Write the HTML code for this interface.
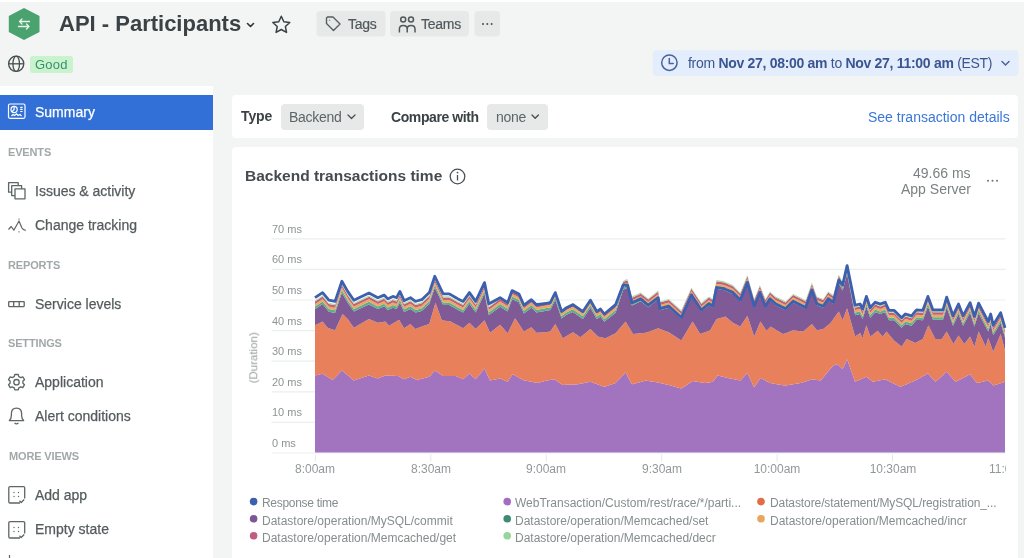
<!DOCTYPE html>
<html><head><meta charset="utf-8">
<style>
*{margin:0;padding:0;box-sizing:border-box}
html,body{width:1024px;height:558px;overflow:hidden;background:#f3f4f4;font-family:"Liberation Sans",sans-serif;color:#293338}
body{position:relative}
.a{position:absolute;white-space:nowrap;line-height:1;will-change:transform}
.box{position:absolute}
svg.full{position:absolute;left:0;top:0}
.nav{font-size:14px;color:#545c5e;-webkit-text-stroke:0.25px currentColor}
.hdr{font-size:11px;color:#a2a8a9;font-weight:700;letter-spacing:-0.15px}
.yl{font-size:11px;color:#8d9395}
.xl{font-size:12px;color:#92989a;text-align:center;width:60px}
.lg{font-size:12px;color:#868d8f}
</style></head><body>
<!-- top white strip -->
<div class="box" style="left:0;top:0;width:1024px;height:2px;background:#fff"></div>

<!-- header -->
<svg class="full" width="1024" height="100" viewBox="0 0 1024 100">
  <polygon points="24,8 39.5,16 39.5,32 24,40 8.8,32 8.8,16" fill="#4aa26e"/>
  <g stroke="#e8f4ec" stroke-width="1.3" fill="none" stroke-linecap="round" stroke-linejoin="round">
    <path d="M19.5,21.5 H29.5 M22,19 L19.5,21.5 L22,24"/>
    <path d="M18.5,26.5 H29 M26.5,24 L29,26.5 L26.5,29"/>
  </g>
  <!-- title chevron -->
  <path d="M247.5,23.5 L250.5,26.5 L253.5,23.5" stroke="#293338" stroke-width="1.6" fill="none" stroke-linecap="round" stroke-linejoin="round"/>
  <!-- star -->
  <path d="M281.30,16.30 L283.83,21.72 L289.76,22.45 L285.39,26.53 L286.53,32.40 L281.30,29.50 L276.07,32.40 L277.21,26.53 L272.84,22.45 L278.77,21.72 Z" stroke="#3a4145" stroke-width="1.5" fill="none" stroke-linejoin="round"/>
  <!-- buttons -->
  <rect x="316.5" y="11" width="69" height="25.5" rx="4" fill="#e7e9e9"/>
  <rect x="390" y="11" width="79" height="25.5" rx="4" fill="#e7e9e9"/>
  <rect x="474.5" y="11" width="25.5" height="25.5" rx="4" fill="#e7e9e9"/>
  <!-- tag icon -->
  <path d="M326.5,18 V23.5 L333.5,30.5 L340,24 L333,17 H327.5 Z" stroke="#565e61" stroke-width="1.4" fill="none" stroke-linejoin="round"/>
  <circle cx="329.6" cy="20.2" r="0.8" fill="#8a9092"/>
  <!-- teams icon -->
  <g stroke="#50585b" stroke-width="1.5" fill="none">
    <circle cx="403.2" cy="19.6" r="2.5"/><circle cx="411" cy="19.6" r="2.5"/>
    <path d="M399.4,32.4 V29 Q399.4,25.4 403.3,25.4 Q407.2,25.4 407.2,29 V32.4 M407.2,29 Q407.2,25.4 411.1,25.4 Q415,25.4 415,29 V32.4"/>
  </g>
  <g fill="#464e4f"><circle cx="483" cy="24" r="1"/><circle cx="487.3" cy="24" r="1"/><circle cx="491.6" cy="24" r="1"/></g>
  <!-- globe -->
  <g stroke="#464e4f" stroke-width="1.3" fill="none">
    <circle cx="16.2" cy="63.8" r="7.6"/>
    <ellipse cx="16.2" cy="63.8" rx="3.3" ry="7.6"/>
    <path d="M8.6,63.8 H23.8"/>
  </g>
  <!-- good badge -->
  <rect x="30" y="56" width="43" height="17" rx="3" fill="#c9f3cd"/>
  <!-- time picker -->
  <rect x="652.7" y="50.3" width="365.7" height="25.7" rx="4" fill="#e3edfc"/>
  <g stroke="#4a63a0" stroke-width="1.5" fill="none" stroke-linecap="round">
    <circle cx="669.4" cy="62.7" r="7.7"/>
    <path d="M669.3,58.5 V63.6 H673.2"/>
    <path d="M1002,61.5 L1005.5,65 L1009,61.5"/>
  </g>
</svg>
<div class="a" style="left:59px;top:13.4px;font-size:22px;font-weight:700;color:#3b4246">API - Participants</div>
<div class="a" style="left:347.5px;top:16.75px;font-size:14px;color:#50585b;letter-spacing:-0.25px;-webkit-text-stroke:0.2px currentColor">Tags</div>
<div class="a" style="left:421px;top:16.75px;font-size:14px;color:#50585b;letter-spacing:-0.25px;-webkit-text-stroke:0.2px currentColor">Teams</div>
<div class="a" style="left:35px;top:58.3px;font-size:13px;color:#3b8f6e;letter-spacing:0.2px">Good</div>
<div class="a" style="left:688px;top:55.95px;font-size:14px;color:#3a5592;letter-spacing:-0.3px">from <b>Nov 27, 08:00 am</b> to <b>Nov 27, 11:00 am</b> (EST)</div>

<!-- sidebar -->
<div class="box" style="left:0;top:86px;width:213px;height:472px;background:#fff"></div>
<div class="box" style="left:0;top:94.9px;width:213px;height:34.7px;background:#326fd6"></div>
<svg class="full" width="213" height="558" viewBox="0 0 213 558">
  <!-- summary icon -->
  <g stroke="#fff" stroke-width="1.2" fill="none">
    <rect x="8.5" y="104" width="16.5" height="14.3" rx="1.5"/>
    <circle cx="14.1" cy="109.5" r="3.1"/>
    <path d="M14.1,106.4 V109.5 L12,111.8 M20.2,107.3 H22.6 M20.2,109.4 H22.6 M20.2,111.5 H22.6 M11.5,116 L13,114.5 L14.5,115.5 L16.5,113.8 L18,115.5 L20,114.5 L21.5,116"/>
  </g>
  <g stroke="#5d6567" stroke-width="1.3" fill="none" stroke-linejoin="round">
    <!-- issues icon -->
    <rect x="8.6" y="182.6" width="9.6" height="9.6" fill="#fff"/>
    <rect x="11.7" y="185.7" width="9.9" height="9.9" fill="#fff"/>
    <rect x="15" y="188.8" width="10" height="10" fill="#fff"/>
    <!-- change tracking -->
    <path d="M8.5,229.5 L11.2,226.5 L13.8,230.2 L16.5,225.5 L19,221 L21.8,227.8 Q23,230.3 25.8,230.3" stroke-width="1.2"/>
    <path d="M19,218.5 V219.8 M19,231.2 V232.5" stroke-width="1"/>
    <!-- service levels -->
    <rect x="8.7" y="301.6" width="15.5" height="5" rx="0.5"/>
    <path d="M13.7,301.6 V306.6 M19.2,301.6 V306.6"/>
    <!-- gear -->
    <circle cx="16.5" cy="382.2" r="2.7"/>
    <path d="M14.8,374.5 H18.2 L18.8,376.6 L20.8,377.6 L22.8,376.8 L24.5,379.7 L22.9,381.1 V383.3 L24.5,384.7 L22.8,387.6 L20.8,386.8 L18.8,387.8 L18.2,389.9 H14.8 L14.2,387.8 L12.2,386.8 L10.2,387.6 L8.5,384.7 L10.1,383.3 V381.1 L8.5,379.7 L10.2,376.8 L12.2,377.6 L14.2,376.6 Z"/>
    <!-- bell -->
    <path d="M9.3,420.6 H23.7 Q21.6,418.6 21.6,415.2 V413.6 Q21.6,408.2 16.5,408.2 Q11.4,408.2 11.4,413.6 V415.2 Q11.4,418.6 9.3,420.6 Z M14.6,423 Q16.5,424.9 18.4,423"/>
    <path d="M9.5,555 V558" stroke-width="1.2"/>
    <!-- add app -->
    <path d="M20,503 H10 Q8.8,503 8.8,501.8 V487.8 Q8.8,486.6 10,486.6 H23.5 Q24.7,486.6 24.7,487.8 V498.5 M19.5,500.8 L21.2,502.5 L24.2,499.5"/>
    <path d="M20,538 H10 Q8.8,538 8.8,536.8 V522.8 Q8.8,521.6 10,521.6 H23.5 Q24.7,521.6 24.7,522.8 V533.5 M19.5,535.8 L21.2,537.5 L24.2,534.5"/>
  </g>
  <g fill="#5d6567">
    <circle cx="14" cy="492.5" r="0.7"/><circle cx="18.5" cy="492.5" r="0.7"/><circle cx="14" cy="496.5" r="0.7"/><circle cx="18.5" cy="496.5" r="0.7"/>
    <circle cx="14" cy="527.5" r="0.7"/><circle cx="18.5" cy="527.5" r="0.7"/><circle cx="14" cy="531.5" r="0.7"/><circle cx="18.5" cy="531.5" r="0.7"/>
  </g>
</svg>
<div class="a nav" style="left:35px;top:105.15px;color:#fff">Summary</div>
<div class="a hdr" style="left:8px;top:146.7px">EVENTS</div>
<div class="a nav" style="left:34.6px;top:183.5px">Issues &amp; activity</div>
<div class="a nav" style="left:34.6px;top:218.4px">Change tracking</div>
<div class="a hdr" style="left:8px;top:260.1px">REPORTS</div>
<div class="a nav" style="left:34.8px;top:296.8px">Service levels</div>
<div class="a hdr" style="left:8px;top:338.1px">SETTINGS</div>
<div class="a nav" style="left:34.8px;top:375.2px">Application</div>
<div class="a nav" style="left:34.8px;top:409.1px">Alert conditions</div>
<div class="a hdr" style="left:8.5px;top:451.4px">MORE VIEWS</div>
<div class="a nav" style="left:34.9px;top:487.8px">Add app</div>
<div class="a nav" style="left:34.9px;top:522.2px">Empty state</div>

<!-- card 1 -->
<div class="box" style="left:232px;top:94.5px;width:786px;height:43.5px;background:#fff;border-radius:4px"></div>
<div class="box" style="left:280.6px;top:103.5px;width:83.4px;height:26px;background:#e7e9e9;border-radius:4px"></div>
<div class="box" style="left:487.2px;top:103.5px;width:60.8px;height:26px;background:#e7e9e9;border-radius:4px"></div>
<svg class="full" width="1024" height="140" viewBox="0 0 1024 140">
  <g stroke="#464e4f" stroke-width="1.3" fill="none" stroke-linecap="round" stroke-linejoin="round">
    <path d="M348,115 L351.5,118.5 L355,115"/>
    <path d="M532,115 L535.2,118.3 L538.4,115"/>
  </g>
</svg>
<div class="a" style="left:240.5px;top:109.15px;font-size:14px;font-weight:700;color:#3a4245;letter-spacing:-0.1px">Type</div>
<div class="a" style="left:289.4px;top:109.65px;font-size:14px;color:#5d6567;letter-spacing:-0.3px">Backend</div>
<div class="a" style="left:390.9px;top:109.65px;font-size:14px;font-weight:700;color:#3a4245;letter-spacing:-0.4px">Compare with</div>
<div class="a" style="left:496px;top:109.65px;font-size:14px;color:#5d6567;letter-spacing:-0.3px">none</div>
<div class="a" style="left:868px;top:109.5px;font-size:14px;color:#3a77d8">See transaction details</div>

<!-- card 2 -->
<div class="box" style="left:232px;top:147px;width:786px;height:420px;background:#fff;border-radius:4px"></div>
<div class="a" style="left:244.6px;top:167.9px;font-size:15.5px;font-weight:700;color:#454c50">Backend transactions time</div>
<svg class="full" width="1024" height="558" viewBox="0 0 1024 558">
  <g stroke="#4a5255" stroke-width="1.3" fill="none">
    <circle cx="457.5" cy="176.5" r="7.3"/>
    <path d="M457.5,175 V180.5"/>
  </g>
  <circle cx="457.5" cy="172.6" r="0.9" fill="#4a5255"/>
  <g fill="#6d7576"><circle cx="988" cy="180.8" r="1"/><circle cx="992.5" cy="180.8" r="1"/><circle cx="997" cy="180.8" r="1"/></g>
  <!-- gridlines -->
  <g stroke="#eceeee" stroke-width="1.2">
    <path d="M271.5,238.8 H1005.5 M271.5,269.4 H1005.5 M271.5,300.0 H1005.5 M271.5,330.6 H1005.5 M271.5,361.2 H1005.5 M271.5,391.8 H1005.5 M271.5,422.4 H1005.5 M271.5,453.0 H1005.5"/>
  </g>
  <g stroke="#e4e6e6" stroke-width="1">
    <path d="M315.3,454.5 V461.5 M430.8,454.5 V461.5 M546.2,454.5 V461.5 M661.7,454.5 V461.5 M777.1,454.5 V461.5 M892.5,454.5 V461.5"/>
  </g>
<polygon fill="#a274bf" points="315.0,375.5 322.6,373.7 327.6,376.9 328.8,377.6 332.6,380.0 335.1,377.4 341.9,370.5 342.6,371.1 347.7,375.3 353.9,380.5 359.0,378.8 369.0,375.5 377.8,378.5 384.1,376.0 385.3,375.5 387.8,375.6 389.1,375.7 392.9,375.8 394.1,375.8 396.6,375.9 397.9,376.0 399.1,376.6 399.9,377.1 404.1,379.3 410.4,376.7 415.4,379.3 416.7,380.0 421.7,378.7 429.3,376.7 434.8,370.5 435.5,371.0 441.8,375.1 443.1,376.0 449.3,376.0 450.6,376.0 455.6,376.0 458.1,377.1 463.1,379.3 469.4,373.5 475.7,379.3 484.5,368.5 488.8,377.9 490.0,380.5 500.1,378.5 507.6,381.8 512.1,375.0 512.6,374.2 515.1,375.6 518.9,377.8 522.7,380.0 523.9,380.2 531.4,381.7 536.5,382.8 537.7,383.0 546.5,380.5 550.3,379.9 554.0,379.3 555.3,380.1 561.6,384.2 562.8,385.0 566.6,384.8 572.9,384.5 577.9,384.3 580.4,383.8 582.9,383.3 590.4,381.8 596.7,384.1 598.0,384.5 600.5,385.4 604.3,386.8 605.5,386.4 615.6,383.0 623.1,375.1 625.6,372.5 627.6,376.2 631.9,384.3 633.1,384.0 640.7,381.9 645.7,380.5 648.2,380.9 658.2,382.5 660.0,382.9 668.8,385.1 681.3,388.6 691.4,381.9 692.6,381.1 700.2,382.3 701.4,382.5 705.2,383.1 709.0,382.4 710.2,382.2 712.7,381.8 716.5,377.0 717.7,375.5 724.0,377.1 725.3,377.4 727.8,378.0 732.8,379.0 740.3,380.5 747.4,373.0 754.2,387.6 759.9,378.8 760.4,378.0 765.4,380.5 766.7,381.2 770.0,382.8 770.5,383.1 775.5,383.9 783.0,385.2 785.5,385.6 793.1,384.3 800.6,383.1 803.1,382.3 805.6,381.4 811.9,379.3 816.9,380.0 820.7,380.5 823.2,377.5 828.2,371.5 830.7,368.5 833.2,365.5 837.5,364.2 838.8,365.5 842.6,369.3 847.1,359.2 855.1,381.8 860.1,379.6 862.6,378.5 866.4,376.8 870.2,379.8 872.7,381.8 875.2,381.3 877.7,380.8 880.2,380.3 882.7,379.8 885.2,379.3 886.5,379.9 889.0,381.2 894.0,383.7 900.3,386.8 901.6,386.3 905.3,384.7 906.6,384.2 911.6,382.1 915.4,380.5 916.6,379.8 922.9,376.3 927.9,373.5 928.4,374.1 932.9,379.0 935.4,381.8 941.7,376.2 943.0,375.1 946.7,371.8 953.0,379.0 953.5,379.5 955.5,381.8 958.5,380.3 963.1,377.9 964.3,377.3 970.1,374.3 974.4,379.9 976.9,383.1 978.6,382.7 985.7,381.1 988.2,380.5 990.7,383.1 993.2,385.6 1000.7,383.2 1005.0,381.8 1005.0,452.5 1000.7,452.5 993.2,452.5 990.7,452.5 988.2,452.5 985.7,452.5 978.6,452.5 976.9,452.5 974.4,452.5 970.1,452.5 964.3,452.5 963.1,452.5 958.5,452.5 955.5,452.5 953.5,452.5 953.0,452.5 946.7,452.5 943.0,452.5 941.7,452.5 935.4,452.5 932.9,452.5 928.4,452.5 927.9,452.5 922.9,452.5 916.6,452.5 915.4,452.5 911.6,452.5 906.6,452.5 905.3,452.5 901.6,452.5 900.3,452.5 894.0,452.5 889.0,452.5 886.5,452.5 885.2,452.5 882.7,452.5 880.2,452.5 877.7,452.5 875.2,452.5 872.7,452.5 870.2,452.5 866.4,452.5 862.6,452.5 860.1,452.5 855.1,452.5 847.1,452.5 842.6,452.5 838.8,452.5 837.5,452.5 833.2,452.5 830.7,452.5 828.2,452.5 823.2,452.5 820.7,452.5 816.9,452.5 811.9,452.5 805.6,452.5 803.1,452.5 800.6,452.5 793.1,452.5 785.5,452.5 783.0,452.5 775.5,452.5 770.5,452.5 770.0,452.5 766.7,452.5 765.4,452.5 760.4,452.5 759.9,452.5 754.2,452.5 747.4,452.5 740.3,452.5 732.8,452.5 727.8,452.5 725.3,452.5 724.0,452.5 717.7,452.5 716.5,452.5 712.7,452.5 710.2,452.5 709.0,452.5 705.2,452.5 701.4,452.5 700.2,452.5 692.6,452.5 691.4,452.5 681.3,452.5 668.8,452.5 660.0,452.5 658.2,452.5 648.2,452.5 645.7,452.5 640.7,452.5 633.1,452.5 631.9,452.5 627.6,452.5 625.6,452.5 623.1,452.5 615.6,452.5 605.5,452.5 604.3,452.5 600.5,452.5 598.0,452.5 596.7,452.5 590.4,452.5 582.9,452.5 580.4,452.5 577.9,452.5 572.9,452.5 566.6,452.5 562.8,452.5 561.6,452.5 555.3,452.5 554.0,452.5 550.3,452.5 546.5,452.5 537.7,452.5 536.5,452.5 531.4,452.5 523.9,452.5 522.7,452.5 518.9,452.5 515.1,452.5 512.6,452.5 512.1,452.5 507.6,452.5 500.1,452.5 490.0,452.5 488.8,452.5 484.5,452.5 475.7,452.5 469.4,452.5 463.1,452.5 458.1,452.5 455.6,452.5 450.6,452.5 449.3,452.5 443.1,452.5 441.8,452.5 435.5,452.5 434.8,452.5 429.3,452.5 421.7,452.5 416.7,452.5 415.4,452.5 410.4,452.5 404.1,452.5 399.9,452.5 399.1,452.5 397.9,452.5 396.6,452.5 394.1,452.5 392.9,452.5 389.1,452.5 387.8,452.5 385.3,452.5 384.1,452.5 377.8,452.5 369.0,452.5 359.0,452.5 353.9,452.5 347.7,452.5 342.6,452.5 341.9,452.5 335.1,452.5 332.6,452.5 328.8,452.5 327.6,452.5 322.6,452.5 315.0,452.5"/>
<polygon fill="#e8805c" points="315.0,325.3 322.6,321.5 327.6,327.8 328.8,328.2 332.6,329.5 335.1,330.3 341.9,315.5 342.6,314.0 347.7,319.0 353.9,327.8 359.0,324.8 369.0,319.0 377.8,322.8 384.1,321.7 385.3,321.5 387.8,324.3 389.1,325.8 392.9,323.5 394.1,322.8 396.6,321.3 397.9,320.5 399.1,319.8 399.9,321.2 404.1,328.3 410.4,324.0 415.4,329.0 416.7,328.5 421.7,326.5 429.3,324.0 434.8,305.1 435.5,302.7 441.8,320.3 443.1,320.5 449.3,321.3 450.6,321.5 455.6,324.2 458.1,325.6 463.1,328.3 469.4,322.8 475.7,329.0 484.5,320.3 488.8,330.1 490.0,332.8 500.1,324.8 507.6,333.3 512.1,324.2 512.6,323.2 515.1,318.2 518.9,324.0 522.7,329.8 523.9,331.6 531.4,327.3 536.5,332.8 537.7,332.7 546.5,331.9 550.3,331.6 554.0,326.0 555.3,324.0 561.6,336.0 562.8,338.3 566.6,336.0 572.9,332.3 577.9,335.6 580.4,337.3 582.9,335.2 590.4,329.0 596.7,335.3 598.0,336.6 600.5,337.2 604.3,338.0 605.5,338.3 615.6,333.3 623.1,324.4 625.6,321.5 627.6,324.9 631.9,332.1 633.1,334.1 640.7,333.3 645.7,332.8 648.2,331.9 658.2,328.3 660.0,329.0 668.8,332.3 681.3,340.4 691.4,323.6 692.6,321.6 700.2,334.1 701.4,333.6 705.2,332.2 709.0,330.8 710.2,330.3 712.7,325.8 716.5,319.0 717.7,318.7 724.0,316.9 725.3,316.5 727.8,318.6 732.8,322.8 740.3,326.6 747.4,315.8 754.2,336.6 759.9,322.8 760.4,321.6 765.4,328.9 766.7,330.8 770.0,327.2 770.5,326.6 775.5,329.6 783.0,334.1 785.5,333.2 793.1,330.3 800.6,331.3 803.1,331.6 805.6,329.5 811.9,324.1 816.9,330.3 820.7,329.6 823.2,329.1 828.2,324.9 830.7,322.8 833.2,319.3 837.5,313.3 838.8,311.5 842.6,320.3 847.1,308.2 855.1,336.6 860.1,332.9 862.6,337.9 866.4,325.3 870.2,336.6 872.7,334.7 875.2,332.7 877.7,330.8 880.2,333.7 882.7,336.6 885.2,333.3 886.5,331.6 889.0,334.5 894.0,340.4 900.3,345.6 901.6,346.7 905.3,341.1 906.6,339.1 911.6,341.3 915.4,342.9 916.6,342.3 922.9,339.1 927.9,326.6 928.4,325.3 932.9,334.2 935.4,339.1 941.7,339.1 943.0,337.2 946.7,331.6 953.0,343.2 953.5,344.1 955.5,340.6 958.5,335.4 963.1,342.3 964.3,344.1 970.1,336.6 974.4,346.7 976.9,337.7 978.6,331.6 985.7,346.7 988.2,337.9 990.7,344.8 993.2,351.7 1000.7,334.1 1005.0,350.4 1005.0,381.8 1000.7,383.2 993.2,385.6 990.7,383.1 988.2,380.5 985.7,381.1 978.6,382.7 976.9,383.1 974.4,379.9 970.1,374.3 964.3,377.3 963.1,377.9 958.5,380.3 955.5,381.8 953.5,379.5 953.0,379.0 946.7,371.8 943.0,375.1 941.7,376.2 935.4,381.8 932.9,379.0 928.4,374.1 927.9,373.5 922.9,376.3 916.6,379.8 915.4,380.5 911.6,382.1 906.6,384.2 905.3,384.7 901.6,386.3 900.3,386.8 894.0,383.7 889.0,381.2 886.5,379.9 885.2,379.3 882.7,379.8 880.2,380.3 877.7,380.8 875.2,381.3 872.7,381.8 870.2,379.8 866.4,376.8 862.6,378.5 860.1,379.6 855.1,381.8 847.1,359.2 842.6,369.3 838.8,365.5 837.5,364.2 833.2,365.5 830.7,368.5 828.2,371.5 823.2,377.5 820.7,380.5 816.9,380.0 811.9,379.3 805.6,381.4 803.1,382.3 800.6,383.1 793.1,384.3 785.5,385.6 783.0,385.2 775.5,383.9 770.5,383.1 770.0,382.8 766.7,381.2 765.4,380.5 760.4,378.0 759.9,378.8 754.2,387.6 747.4,373.0 740.3,380.5 732.8,379.0 727.8,378.0 725.3,377.4 724.0,377.1 717.7,375.5 716.5,377.0 712.7,381.8 710.2,382.2 709.0,382.4 705.2,383.1 701.4,382.5 700.2,382.3 692.6,381.1 691.4,381.9 681.3,388.6 668.8,385.1 660.0,382.9 658.2,382.5 648.2,380.9 645.7,380.5 640.7,381.9 633.1,384.0 631.9,384.3 627.6,376.2 625.6,372.5 623.1,375.1 615.6,383.0 605.5,386.4 604.3,386.8 600.5,385.4 598.0,384.5 596.7,384.1 590.4,381.8 582.9,383.3 580.4,383.8 577.9,384.3 572.9,384.5 566.6,384.8 562.8,385.0 561.6,384.2 555.3,380.1 554.0,379.3 550.3,379.9 546.5,380.5 537.7,383.0 536.5,382.8 531.4,381.7 523.9,380.2 522.7,380.0 518.9,377.8 515.1,375.6 512.6,374.2 512.1,375.0 507.6,381.8 500.1,378.5 490.0,380.5 488.8,377.9 484.5,368.5 475.7,379.3 469.4,373.5 463.1,379.3 458.1,377.1 455.6,376.0 450.6,376.0 449.3,376.0 443.1,376.0 441.8,375.1 435.5,371.0 434.8,370.5 429.3,376.7 421.7,378.7 416.7,380.0 415.4,379.3 410.4,376.7 404.1,379.3 399.9,377.1 399.1,376.6 397.9,376.0 396.6,375.9 394.1,375.8 392.9,375.8 389.1,375.7 387.8,375.6 385.3,375.5 384.1,376.0 377.8,378.5 369.0,375.5 359.0,378.8 353.9,380.5 347.7,375.3 342.6,371.1 341.9,370.5 335.1,377.4 332.6,380.0 328.8,377.6 327.6,376.9 322.6,373.7 315.0,375.5"/>
<polygon fill="#7f5a96" points="315.0,309.2 322.6,304.1 327.6,310.2 328.8,311.7 332.6,312.4 335.1,312.8 341.9,292.7 342.6,293.9 347.7,302.8 353.9,311.6 359.0,309.1 369.0,304.4 377.8,309.0 384.1,306.4 385.3,307.6 387.8,310.2 389.1,309.6 392.9,307.7 394.1,308.1 396.6,309.0 397.9,306.5 399.1,304.2 399.9,302.7 404.1,311.9 410.4,308.9 415.4,312.6 416.7,312.3 421.7,310.9 429.3,303.8 434.8,287.5 435.5,288.9 441.8,302.3 443.1,305.0 449.3,305.0 450.6,305.8 455.6,308.6 458.1,310.0 463.1,312.5 469.4,303.7 475.7,312.4 484.5,293.6 488.8,314.9 490.0,314.2 500.1,306.7 507.6,311.4 512.1,299.2 512.6,299.4 515.1,300.6 518.9,302.3 522.7,310.7 523.9,313.4 531.4,307.7 536.5,312.5 537.7,312.3 546.5,310.7 550.3,310.0 554.0,302.4 555.3,299.8 561.6,318.5 562.8,317.6 566.6,314.8 572.9,311.9 577.9,315.4 580.4,317.2 582.9,318.9 590.4,307.7 596.7,319.1 598.0,318.3 600.5,316.7 604.3,321.8 605.5,320.8 615.6,312.7 623.1,289.9 625.6,288.4 627.6,288.0 631.9,305.4 633.1,304.9 640.7,301.3 645.7,305.2 648.2,307.2 658.2,299.3 660.0,310.2 668.8,307.7 681.3,319.0 691.4,296.4 692.6,298.2 700.2,309.7 701.4,311.5 705.2,308.3 709.0,305.2 710.2,306.0 712.7,307.7 716.5,288.9 717.7,289.1 724.0,290.1 725.3,290.7 727.8,291.7 732.8,293.9 740.3,301.4 747.4,283.9 754.2,307.7 759.9,293.9 760.4,295.2 765.4,307.7 766.7,305.6 770.0,300.2 770.5,300.7 775.5,305.2 783.0,308.9 785.5,310.2 793.1,302.7 800.6,306.4 803.1,307.7 805.6,309.0 811.9,291.4 816.9,305.2 820.7,306.7 823.2,307.7 828.2,300.2 830.7,302.0 833.2,303.9 837.5,287.7 838.8,283.3 842.6,290.6 847.1,273.8 855.1,315.2 860.1,314.0 862.6,319.0 866.4,306.4 870.2,317.7 872.7,314.9 875.2,312.2 877.7,313.1 880.2,314.0 882.7,313.1 885.2,312.2 886.5,315.0 889.0,320.3 894.0,320.3 900.3,326.5 901.6,327.8 905.3,324.0 906.6,324.4 911.6,325.8 915.4,321.2 916.6,319.8 922.9,320.3 927.9,306.4 928.4,307.7 932.9,319.8 935.4,319.8 941.7,319.8 943.0,319.8 946.7,307.2 953.0,325.8 953.5,324.7 955.5,320.4 958.5,314.0 963.1,325.8 964.3,323.6 970.1,312.7 974.4,326.5 976.9,318.6 978.6,313.2 985.7,326.8 988.2,331.6 990.7,324.0 993.2,335.3 1000.7,322.8 1005.0,337.8 1005.0,350.4 1000.7,334.1 993.2,351.7 990.7,344.8 988.2,337.9 985.7,346.7 978.6,331.6 976.9,337.7 974.4,346.7 970.1,336.6 964.3,344.1 963.1,342.3 958.5,335.4 955.5,340.6 953.5,344.1 953.0,343.2 946.7,331.6 943.0,337.2 941.7,339.1 935.4,339.1 932.9,334.2 928.4,325.3 927.9,326.6 922.9,339.1 916.6,342.3 915.4,342.9 911.6,341.3 906.6,339.1 905.3,341.1 901.6,346.7 900.3,345.6 894.0,340.4 889.0,334.5 886.5,331.6 885.2,333.3 882.7,336.6 880.2,333.7 877.7,330.8 875.2,332.7 872.7,334.7 870.2,336.6 866.4,325.3 862.6,337.9 860.1,332.9 855.1,336.6 847.1,308.2 842.6,320.3 838.8,311.5 837.5,313.3 833.2,319.3 830.7,322.8 828.2,324.9 823.2,329.1 820.7,329.6 816.9,330.3 811.9,324.1 805.6,329.5 803.1,331.6 800.6,331.3 793.1,330.3 785.5,333.2 783.0,334.1 775.5,329.6 770.5,326.6 770.0,327.2 766.7,330.8 765.4,328.9 760.4,321.6 759.9,322.8 754.2,336.6 747.4,315.8 740.3,326.6 732.8,322.8 727.8,318.6 725.3,316.5 724.0,316.9 717.7,318.7 716.5,319.0 712.7,325.8 710.2,330.3 709.0,330.8 705.2,332.2 701.4,333.6 700.2,334.1 692.6,321.6 691.4,323.6 681.3,340.4 668.8,332.3 660.0,329.0 658.2,328.3 648.2,331.9 645.7,332.8 640.7,333.3 633.1,334.1 631.9,332.1 627.6,324.9 625.6,321.5 623.1,324.4 615.6,333.3 605.5,338.3 604.3,338.0 600.5,337.2 598.0,336.6 596.7,335.3 590.4,329.0 582.9,335.2 580.4,337.3 577.9,335.6 572.9,332.3 566.6,336.0 562.8,338.3 561.6,336.0 555.3,324.0 554.0,326.0 550.3,331.6 546.5,331.9 537.7,332.7 536.5,332.8 531.4,327.3 523.9,331.6 522.7,329.8 518.9,324.0 515.1,318.2 512.6,323.2 512.1,324.2 507.6,333.3 500.1,324.8 490.0,332.8 488.8,330.1 484.5,320.3 475.7,329.0 469.4,322.8 463.1,328.3 458.1,325.6 455.6,324.2 450.6,321.5 449.3,321.3 443.1,320.5 441.8,320.3 435.5,302.7 434.8,305.1 429.3,324.0 421.7,326.5 416.7,328.5 415.4,329.0 410.4,324.0 404.1,328.3 399.9,321.2 399.1,319.8 397.9,320.5 396.6,321.3 394.1,322.8 392.9,323.5 389.1,325.8 387.8,324.3 385.3,321.5 384.1,321.7 377.8,322.8 369.0,319.0 359.0,324.8 353.9,327.8 347.7,319.0 342.6,314.0 341.9,315.5 335.1,330.3 332.6,329.5 328.8,328.2 327.6,327.8 322.6,321.5 315.0,325.3"/>
<polygon fill="#5fae8c" points="315.0,306.6 322.6,301.5 327.6,307.6 328.8,309.1 332.6,309.8 335.1,310.2 341.9,290.1 342.6,291.3 347.7,300.2 353.9,309.0 359.0,306.5 369.0,301.8 377.8,306.4 384.1,303.8 385.3,305.0 387.8,307.6 389.1,307.0 392.9,305.1 394.1,305.5 396.6,306.4 397.9,303.9 399.1,301.6 399.9,300.1 404.1,309.3 410.4,306.3 415.4,310.0 416.7,309.7 421.7,308.3 429.3,301.2 434.8,284.9 435.5,286.3 441.8,299.7 443.1,302.4 449.3,302.4 450.6,303.2 455.6,306.0 458.1,307.4 463.1,309.9 469.4,301.1 475.7,309.8 484.5,291.0 488.8,312.3 490.0,311.6 500.1,304.1 507.6,308.8 512.1,296.6 512.6,296.8 515.1,298.0 518.9,299.7 522.7,308.1 523.9,310.8 531.4,305.1 536.5,309.9 537.7,309.7 546.5,308.1 550.3,307.4 554.0,299.8 555.3,297.2 561.6,315.9 562.8,315.0 566.6,312.2 572.9,309.3 577.9,312.8 580.4,314.6 582.9,316.3 590.4,305.1 596.7,316.5 598.0,315.7 600.5,314.1 604.3,319.2 605.5,318.2 615.6,310.1 623.1,287.3 625.6,285.8 627.6,285.4 631.9,302.8 633.1,302.3 640.7,298.7 645.7,302.6 648.2,304.6 658.2,296.7 660.0,307.6 668.8,305.1 681.3,316.4 691.4,293.8 692.6,295.6 700.2,307.1 701.4,308.9 705.2,305.7 709.0,302.6 710.2,303.4 712.7,305.1 716.5,286.3 717.7,286.5 724.0,287.5 725.3,288.1 727.8,289.1 732.8,291.3 740.3,298.8 747.4,281.3 754.2,305.1 759.9,291.3 760.4,292.6 765.4,305.1 766.7,303.0 770.0,297.6 770.5,298.1 775.5,302.6 783.0,306.3 785.5,307.6 793.1,300.1 800.6,303.8 803.1,305.1 805.6,306.4 811.9,288.8 816.9,302.6 820.7,304.1 823.2,305.1 828.2,297.6 830.7,299.4 833.2,301.3 837.5,285.1 838.8,280.7 842.6,288.0 847.1,271.2 855.1,312.6 860.1,311.4 862.6,316.4 866.4,303.8 870.2,315.1 872.7,312.3 875.2,309.6 877.7,310.5 880.2,311.4 882.7,310.5 885.2,309.6 886.5,312.4 889.0,317.7 894.0,317.7 900.3,323.9 901.6,325.2 905.3,321.4 906.6,321.8 911.6,323.2 915.4,318.6 916.6,317.2 922.9,317.7 927.9,303.8 928.4,305.1 932.9,317.2 935.4,317.2 941.7,317.2 943.0,317.2 946.7,304.6 953.0,323.2 953.5,322.1 955.5,317.8 958.5,311.4 963.1,323.2 964.3,321.0 970.1,310.1 974.4,323.9 976.9,316.0 978.6,310.6 985.7,324.2 988.2,329.0 990.7,321.4 993.2,332.7 1000.7,320.2 1005.0,335.2 1005.0,337.8 1000.7,322.8 993.2,335.3 990.7,324.0 988.2,331.6 985.7,326.8 978.6,313.2 976.9,318.6 974.4,326.5 970.1,312.7 964.3,323.6 963.1,325.8 958.5,314.0 955.5,320.4 953.5,324.7 953.0,325.8 946.7,307.2 943.0,319.8 941.7,319.8 935.4,319.8 932.9,319.8 928.4,307.7 927.9,306.4 922.9,320.3 916.6,319.8 915.4,321.2 911.6,325.8 906.6,324.4 905.3,324.0 901.6,327.8 900.3,326.5 894.0,320.3 889.0,320.3 886.5,315.0 885.2,312.2 882.7,313.1 880.2,314.0 877.7,313.1 875.2,312.2 872.7,314.9 870.2,317.7 866.4,306.4 862.6,319.0 860.1,314.0 855.1,315.2 847.1,273.8 842.6,290.6 838.8,283.3 837.5,287.7 833.2,303.9 830.7,302.0 828.2,300.2 823.2,307.7 820.7,306.7 816.9,305.2 811.9,291.4 805.6,309.0 803.1,307.7 800.6,306.4 793.1,302.7 785.5,310.2 783.0,308.9 775.5,305.2 770.5,300.7 770.0,300.2 766.7,305.6 765.4,307.7 760.4,295.2 759.9,293.9 754.2,307.7 747.4,283.9 740.3,301.4 732.8,293.9 727.8,291.7 725.3,290.7 724.0,290.1 717.7,289.1 716.5,288.9 712.7,307.7 710.2,306.0 709.0,305.2 705.2,308.3 701.4,311.5 700.2,309.7 692.6,298.2 691.4,296.4 681.3,319.0 668.8,307.7 660.0,310.2 658.2,299.3 648.2,307.2 645.7,305.2 640.7,301.3 633.1,304.9 631.9,305.4 627.6,288.0 625.6,288.4 623.1,289.9 615.6,312.7 605.5,320.8 604.3,321.8 600.5,316.7 598.0,318.3 596.7,319.1 590.4,307.7 582.9,318.9 580.4,317.2 577.9,315.4 572.9,311.9 566.6,314.8 562.8,317.6 561.6,318.5 555.3,299.8 554.0,302.4 550.3,310.0 546.5,310.7 537.7,312.3 536.5,312.5 531.4,307.7 523.9,313.4 522.7,310.7 518.9,302.3 515.1,300.6 512.6,299.4 512.1,299.2 507.6,311.4 500.1,306.7 490.0,314.2 488.8,314.9 484.5,293.6 475.7,312.4 469.4,303.7 463.1,312.5 458.1,310.0 455.6,308.6 450.6,305.8 449.3,305.0 443.1,305.0 441.8,302.3 435.5,288.9 434.8,287.5 429.3,303.8 421.7,310.9 416.7,312.3 415.4,312.6 410.4,308.9 404.1,311.9 399.9,302.7 399.1,304.2 397.9,306.5 396.6,309.0 394.1,308.1 392.9,307.7 389.1,309.6 387.8,310.2 385.3,307.6 384.1,306.4 377.8,309.0 369.0,304.4 359.0,309.1 353.9,311.6 347.7,302.8 342.6,293.9 341.9,292.7 335.1,312.8 332.6,312.4 328.8,311.7 327.6,310.2 322.6,304.1 315.0,309.2"/>
<polygon fill="#e8a960" points="315.0,304.1 322.6,299.0 327.6,305.1 328.8,306.6 332.6,307.3 335.1,307.7 341.9,287.6 342.6,288.8 347.7,297.7 353.9,306.5 359.0,304.0 369.0,299.3 377.8,303.9 384.1,301.3 385.3,302.5 387.8,305.1 389.1,304.5 392.9,302.6 394.1,303.0 396.6,303.9 397.9,301.4 399.1,299.1 399.9,297.6 404.1,306.8 410.4,303.8 415.4,307.5 416.7,307.2 421.7,305.8 429.3,298.7 434.8,282.4 435.5,283.8 441.8,297.2 443.1,299.9 449.3,299.9 450.6,300.7 455.6,303.5 458.1,304.9 463.1,307.4 469.4,298.6 475.7,307.3 484.5,288.5 488.8,309.8 490.0,309.1 500.1,301.6 507.6,306.3 512.1,294.1 512.6,294.3 515.1,295.5 518.9,297.2 522.7,305.6 523.9,308.3 531.4,302.6 536.5,307.4 537.7,307.2 546.5,305.6 550.3,304.9 554.0,297.3 555.3,294.7 561.6,313.4 562.8,312.5 566.6,309.7 572.9,306.8 577.9,310.3 580.4,312.1 582.9,313.8 590.4,302.6 596.7,314.0 598.0,313.2 600.5,311.6 604.3,316.7 605.5,315.7 615.6,307.6 623.1,284.8 625.6,283.2 627.6,282.9 631.9,300.3 633.1,299.8 640.7,296.2 645.7,300.1 648.2,302.1 658.2,294.2 660.0,305.1 668.8,302.6 681.3,313.9 691.4,291.3 692.6,293.1 700.2,304.6 701.4,306.4 705.2,303.2 709.0,300.1 710.2,300.9 712.7,302.6 716.5,283.8 717.7,284.0 724.0,285.0 725.3,285.6 727.8,286.6 732.8,288.8 740.3,296.3 747.4,278.8 754.2,302.6 759.9,288.8 760.4,290.1 765.4,302.6 766.7,300.5 770.0,295.1 770.5,295.6 775.5,300.1 783.0,303.8 785.5,305.1 793.1,297.6 800.6,301.3 803.1,302.6 805.6,303.9 811.9,286.3 816.9,300.1 820.7,301.6 823.2,302.6 828.2,295.1 830.7,296.9 833.2,298.8 837.5,282.6 838.8,278.2 842.6,285.5 847.1,268.7 855.1,310.1 860.1,308.9 862.6,313.9 866.4,301.3 870.2,312.6 872.7,309.8 875.2,307.1 877.7,308.0 880.2,308.9 882.7,308.0 885.2,307.1 886.5,309.9 889.0,315.2 894.0,315.2 900.3,321.4 901.6,322.7 905.3,318.9 906.6,319.3 911.6,320.7 915.4,316.1 916.6,314.7 922.9,315.2 927.9,301.3 928.4,302.6 932.9,314.7 935.4,314.7 941.7,314.7 943.0,314.7 946.7,302.1 953.0,320.7 953.5,319.6 955.5,315.3 958.5,308.9 963.1,320.7 964.3,318.5 970.1,307.6 974.4,321.4 976.9,313.5 978.6,308.1 985.7,321.7 988.2,326.5 990.7,318.9 993.2,330.2 1000.7,317.7 1005.0,332.7 1005.0,335.2 1000.7,320.2 993.2,332.7 990.7,321.4 988.2,329.0 985.7,324.2 978.6,310.6 976.9,316.0 974.4,323.9 970.1,310.1 964.3,321.0 963.1,323.2 958.5,311.4 955.5,317.8 953.5,322.1 953.0,323.2 946.7,304.6 943.0,317.2 941.7,317.2 935.4,317.2 932.9,317.2 928.4,305.1 927.9,303.8 922.9,317.7 916.6,317.2 915.4,318.6 911.6,323.2 906.6,321.8 905.3,321.4 901.6,325.2 900.3,323.9 894.0,317.7 889.0,317.7 886.5,312.4 885.2,309.6 882.7,310.5 880.2,311.4 877.7,310.5 875.2,309.6 872.7,312.3 870.2,315.1 866.4,303.8 862.6,316.4 860.1,311.4 855.1,312.6 847.1,271.2 842.6,288.0 838.8,280.7 837.5,285.1 833.2,301.3 830.7,299.4 828.2,297.6 823.2,305.1 820.7,304.1 816.9,302.6 811.9,288.8 805.6,306.4 803.1,305.1 800.6,303.8 793.1,300.1 785.5,307.6 783.0,306.3 775.5,302.6 770.5,298.1 770.0,297.6 766.7,303.0 765.4,305.1 760.4,292.6 759.9,291.3 754.2,305.1 747.4,281.3 740.3,298.8 732.8,291.3 727.8,289.1 725.3,288.1 724.0,287.5 717.7,286.5 716.5,286.3 712.7,305.1 710.2,303.4 709.0,302.6 705.2,305.7 701.4,308.9 700.2,307.1 692.6,295.6 691.4,293.8 681.3,316.4 668.8,305.1 660.0,307.6 658.2,296.7 648.2,304.6 645.7,302.6 640.7,298.7 633.1,302.3 631.9,302.8 627.6,285.4 625.6,285.8 623.1,287.3 615.6,310.1 605.5,318.2 604.3,319.2 600.5,314.1 598.0,315.7 596.7,316.5 590.4,305.1 582.9,316.3 580.4,314.6 577.9,312.8 572.9,309.3 566.6,312.2 562.8,315.0 561.6,315.9 555.3,297.2 554.0,299.8 550.3,307.4 546.5,308.1 537.7,309.7 536.5,309.9 531.4,305.1 523.9,310.8 522.7,308.1 518.9,299.7 515.1,298.0 512.6,296.8 512.1,296.6 507.6,308.8 500.1,304.1 490.0,311.6 488.8,312.3 484.5,291.0 475.7,309.8 469.4,301.1 463.1,309.9 458.1,307.4 455.6,306.0 450.6,303.2 449.3,302.4 443.1,302.4 441.8,299.7 435.5,286.3 434.8,284.9 429.3,301.2 421.7,308.3 416.7,309.7 415.4,310.0 410.4,306.3 404.1,309.3 399.9,300.1 399.1,301.6 397.9,303.9 396.6,306.4 394.1,305.5 392.9,305.1 389.1,307.0 387.8,307.6 385.3,305.0 384.1,303.8 377.8,306.4 369.0,301.8 359.0,306.5 353.9,309.0 347.7,300.2 342.6,291.3 341.9,290.1 335.1,310.2 332.6,309.8 328.8,309.1 327.6,307.6 322.6,301.5 315.0,306.6"/>
<polygon fill="#c75f78" points="315.0,301.6 322.6,296.5 327.6,302.6 328.8,304.1 332.6,304.8 335.1,305.2 341.9,285.1 342.6,286.3 347.7,295.2 353.9,304.0 359.0,301.5 369.0,296.8 377.8,301.4 384.1,298.8 385.3,300.0 387.8,302.6 389.1,302.0 392.9,300.1 394.1,300.5 396.6,301.4 397.9,298.9 399.1,296.6 399.9,295.1 404.1,304.3 410.4,301.3 415.4,305.0 416.7,304.7 421.7,303.3 429.3,296.2 434.8,279.9 435.5,281.3 441.8,294.7 443.1,297.4 449.3,297.4 450.6,298.2 455.6,301.0 458.1,302.4 463.1,304.9 469.4,296.1 475.7,304.8 484.5,286.0 488.8,307.3 490.0,306.6 500.1,299.1 507.6,303.8 512.1,291.6 512.6,291.8 515.1,293.0 518.9,294.7 522.7,303.1 523.9,305.8 531.4,300.1 536.5,304.9 537.7,304.7 546.5,303.1 550.3,302.4 554.0,294.8 555.3,292.2 561.6,310.9 562.8,310.0 566.6,307.2 572.9,304.3 577.9,307.8 580.4,309.6 582.9,311.3 590.4,300.1 596.7,311.5 598.0,310.7 600.5,309.1 604.3,314.2 605.5,313.2 615.6,305.1 623.1,282.3 625.6,280.8 627.6,280.4 631.9,297.8 633.1,297.3 640.7,293.7 645.7,297.6 648.2,299.6 658.2,291.7 660.0,302.6 668.8,300.1 681.3,311.4 691.4,288.8 692.6,290.6 700.2,302.1 701.4,303.9 705.2,300.7 709.0,297.6 710.2,298.4 712.7,300.1 716.5,281.3 717.7,281.5 724.0,282.5 725.3,283.1 727.8,284.1 732.8,286.3 740.3,293.8 747.4,276.3 754.2,300.1 759.9,286.3 760.4,287.6 765.4,300.1 766.7,298.0 770.0,292.6 770.5,293.1 775.5,297.6 783.0,301.3 785.5,302.6 793.1,295.1 800.6,298.8 803.1,300.1 805.6,301.4 811.9,283.8 816.9,297.6 820.7,299.1 823.2,300.1 828.2,292.6 830.7,294.4 833.2,296.3 837.5,280.1 838.8,275.7 842.6,283.0 847.1,266.2 855.1,307.6 860.1,306.4 862.6,311.4 866.4,298.8 870.2,310.1 872.7,307.3 875.2,304.6 877.7,305.5 880.2,306.4 882.7,305.5 885.2,304.6 886.5,307.4 889.0,312.7 894.0,312.7 900.3,318.9 901.6,320.2 905.3,316.4 906.6,316.8 911.6,318.2 915.4,313.6 916.6,312.2 922.9,312.7 927.9,298.8 928.4,300.1 932.9,312.2 935.4,312.2 941.7,312.2 943.0,312.2 946.7,299.6 953.0,318.2 953.5,317.1 955.5,312.8 958.5,306.4 963.1,318.2 964.3,316.0 970.1,305.1 974.4,318.9 976.9,311.0 978.6,305.6 985.7,319.2 988.2,324.0 990.7,316.4 993.2,327.7 1000.7,315.2 1005.0,330.2 1005.0,332.7 1000.7,317.7 993.2,330.2 990.7,318.9 988.2,326.5 985.7,321.7 978.6,308.1 976.9,313.5 974.4,321.4 970.1,307.6 964.3,318.5 963.1,320.7 958.5,308.9 955.5,315.3 953.5,319.6 953.0,320.7 946.7,302.1 943.0,314.7 941.7,314.7 935.4,314.7 932.9,314.7 928.4,302.6 927.9,301.3 922.9,315.2 916.6,314.7 915.4,316.1 911.6,320.7 906.6,319.3 905.3,318.9 901.6,322.7 900.3,321.4 894.0,315.2 889.0,315.2 886.5,309.9 885.2,307.1 882.7,308.0 880.2,308.9 877.7,308.0 875.2,307.1 872.7,309.8 870.2,312.6 866.4,301.3 862.6,313.9 860.1,308.9 855.1,310.1 847.1,268.7 842.6,285.5 838.8,278.2 837.5,282.6 833.2,298.8 830.7,296.9 828.2,295.1 823.2,302.6 820.7,301.6 816.9,300.1 811.9,286.3 805.6,303.9 803.1,302.6 800.6,301.3 793.1,297.6 785.5,305.1 783.0,303.8 775.5,300.1 770.5,295.6 770.0,295.1 766.7,300.5 765.4,302.6 760.4,290.1 759.9,288.8 754.2,302.6 747.4,278.8 740.3,296.3 732.8,288.8 727.8,286.6 725.3,285.6 724.0,285.0 717.7,284.0 716.5,283.8 712.7,302.6 710.2,300.9 709.0,300.1 705.2,303.2 701.4,306.4 700.2,304.6 692.6,293.1 691.4,291.3 681.3,313.9 668.8,302.6 660.0,305.1 658.2,294.2 648.2,302.1 645.7,300.1 640.7,296.2 633.1,299.8 631.9,300.3 627.6,282.9 625.6,283.2 623.1,284.8 615.6,307.6 605.5,315.7 604.3,316.7 600.5,311.6 598.0,313.2 596.7,314.0 590.4,302.6 582.9,313.8 580.4,312.1 577.9,310.3 572.9,306.8 566.6,309.7 562.8,312.5 561.6,313.4 555.3,294.7 554.0,297.3 550.3,304.9 546.5,305.6 537.7,307.2 536.5,307.4 531.4,302.6 523.9,308.3 522.7,305.6 518.9,297.2 515.1,295.5 512.6,294.3 512.1,294.1 507.6,306.3 500.1,301.6 490.0,309.1 488.8,309.8 484.5,288.5 475.7,307.3 469.4,298.6 463.1,307.4 458.1,304.9 455.6,303.5 450.6,300.7 449.3,299.9 443.1,299.9 441.8,297.2 435.5,283.8 434.8,282.4 429.3,298.7 421.7,305.8 416.7,307.2 415.4,307.5 410.4,303.8 404.1,306.8 399.9,297.6 399.1,299.1 397.9,301.4 396.6,303.9 394.1,303.0 392.9,302.6 389.1,304.5 387.8,305.1 385.3,302.5 384.1,301.3 377.8,303.9 369.0,299.3 359.0,304.0 353.9,306.5 347.7,297.7 342.6,288.8 341.9,287.6 335.1,307.7 332.6,307.3 328.8,306.6 327.6,305.1 322.6,299.0 315.0,304.1"/>
<polygon fill="#a8dca8" points="315.0,300.4 322.6,295.3 327.6,301.4 328.8,302.9 332.6,303.6 335.1,304.0 341.9,283.9 342.6,285.1 347.7,294.0 353.9,302.8 359.0,300.3 369.0,295.6 377.8,300.2 384.1,297.6 385.3,298.8 387.8,301.4 389.1,300.8 392.9,298.9 394.1,299.3 396.6,300.2 397.9,297.7 399.1,295.4 399.9,293.9 404.1,303.1 410.4,300.1 415.4,303.8 416.7,303.5 421.7,302.1 429.3,295.0 434.8,278.7 435.5,280.1 441.8,293.5 443.1,296.2 449.3,296.2 450.6,297.0 455.6,299.8 458.1,301.2 463.1,303.7 469.4,294.9 475.7,303.6 484.5,284.8 488.8,306.1 490.0,305.4 500.1,297.9 507.6,302.6 512.1,290.4 512.6,290.6 515.1,291.8 518.9,293.5 522.7,301.9 523.9,304.6 531.4,298.9 536.5,303.7 537.7,303.5 546.5,301.9 550.3,301.2 554.0,293.6 555.3,291.0 561.6,309.7 562.8,308.8 566.6,306.0 572.9,303.1 577.9,306.6 580.4,308.4 582.9,310.1 590.4,298.9 596.7,310.3 598.0,309.5 600.5,307.9 604.3,313.0 605.5,312.0 615.6,303.9 623.1,281.1 625.6,279.6 627.6,279.2 631.9,296.6 633.1,296.1 640.7,292.5 645.7,296.4 648.2,298.4 658.2,290.5 660.0,301.4 668.8,298.9 681.3,310.2 691.4,287.6 692.6,289.4 700.2,300.9 701.4,302.7 705.2,299.5 709.0,296.4 710.2,297.2 712.7,298.9 716.5,280.1 717.7,280.3 724.0,281.3 725.3,281.9 727.8,282.9 732.8,285.1 740.3,292.6 747.4,275.1 754.2,298.9 759.9,285.1 760.4,286.4 765.4,298.9 766.7,296.8 770.0,291.4 770.5,291.9 775.5,296.4 783.0,300.1 785.5,301.4 793.1,293.9 800.6,297.6 803.1,298.9 805.6,300.2 811.9,282.6 816.9,296.4 820.7,297.9 823.2,298.9 828.2,291.4 830.7,293.2 833.2,295.1 837.5,278.9 838.8,274.5 842.6,281.8 847.1,265.0 855.1,306.4 860.1,305.2 862.6,310.2 866.4,297.6 870.2,308.9 872.7,306.1 875.2,303.4 877.7,304.3 880.2,305.2 882.7,304.3 885.2,303.4 886.5,306.2 889.0,311.5 894.0,311.5 900.3,317.7 901.6,319.0 905.3,315.2 906.6,315.6 911.6,317.0 915.4,312.4 916.6,311.0 922.9,311.5 927.9,297.6 928.4,298.9 932.9,311.0 935.4,311.0 941.7,311.0 943.0,311.0 946.7,298.4 953.0,317.0 953.5,315.9 955.5,311.6 958.5,305.2 963.1,317.0 964.3,314.8 970.1,303.9 974.4,317.7 976.9,309.8 978.6,304.4 985.7,318.0 988.2,322.8 990.7,315.2 993.2,326.5 1000.7,314.0 1005.0,329.0 1005.0,330.2 1000.7,315.2 993.2,327.7 990.7,316.4 988.2,324.0 985.7,319.2 978.6,305.6 976.9,311.0 974.4,318.9 970.1,305.1 964.3,316.0 963.1,318.2 958.5,306.4 955.5,312.8 953.5,317.1 953.0,318.2 946.7,299.6 943.0,312.2 941.7,312.2 935.4,312.2 932.9,312.2 928.4,300.1 927.9,298.8 922.9,312.7 916.6,312.2 915.4,313.6 911.6,318.2 906.6,316.8 905.3,316.4 901.6,320.2 900.3,318.9 894.0,312.7 889.0,312.7 886.5,307.4 885.2,304.6 882.7,305.5 880.2,306.4 877.7,305.5 875.2,304.6 872.7,307.3 870.2,310.1 866.4,298.8 862.6,311.4 860.1,306.4 855.1,307.6 847.1,266.2 842.6,283.0 838.8,275.7 837.5,280.1 833.2,296.3 830.7,294.4 828.2,292.6 823.2,300.1 820.7,299.1 816.9,297.6 811.9,283.8 805.6,301.4 803.1,300.1 800.6,298.8 793.1,295.1 785.5,302.6 783.0,301.3 775.5,297.6 770.5,293.1 770.0,292.6 766.7,298.0 765.4,300.1 760.4,287.6 759.9,286.3 754.2,300.1 747.4,276.3 740.3,293.8 732.8,286.3 727.8,284.1 725.3,283.1 724.0,282.5 717.7,281.5 716.5,281.3 712.7,300.1 710.2,298.4 709.0,297.6 705.2,300.7 701.4,303.9 700.2,302.1 692.6,290.6 691.4,288.8 681.3,311.4 668.8,300.1 660.0,302.6 658.2,291.7 648.2,299.6 645.7,297.6 640.7,293.7 633.1,297.3 631.9,297.8 627.6,280.4 625.6,280.8 623.1,282.3 615.6,305.1 605.5,313.2 604.3,314.2 600.5,309.1 598.0,310.7 596.7,311.5 590.4,300.1 582.9,311.3 580.4,309.6 577.9,307.8 572.9,304.3 566.6,307.2 562.8,310.0 561.6,310.9 555.3,292.2 554.0,294.8 550.3,302.4 546.5,303.1 537.7,304.7 536.5,304.9 531.4,300.1 523.9,305.8 522.7,303.1 518.9,294.7 515.1,293.0 512.6,291.8 512.1,291.6 507.6,303.8 500.1,299.1 490.0,306.6 488.8,307.3 484.5,286.0 475.7,304.8 469.4,296.1 463.1,304.9 458.1,302.4 455.6,301.0 450.6,298.2 449.3,297.4 443.1,297.4 441.8,294.7 435.5,281.3 434.8,279.9 429.3,296.2 421.7,303.3 416.7,304.7 415.4,305.0 410.4,301.3 404.1,304.3 399.9,295.1 399.1,296.6 397.9,298.9 396.6,301.4 394.1,300.5 392.9,300.1 389.1,302.0 387.8,302.6 385.3,300.0 384.1,298.8 377.8,301.4 369.0,296.8 359.0,301.5 353.9,304.0 347.7,295.2 342.6,286.3 341.9,285.1 335.1,305.2 332.6,304.8 328.8,304.1 327.6,302.6 322.6,296.5 315.0,301.6"/>
<polyline fill="none" stroke="#3c5fae" stroke-width="2.8" stroke-linejoin="round" points="315.0,297.7 322.6,292.6 327.6,298.7 328.8,300.2 332.6,300.9 335.1,301.4 341.9,281.3 342.6,282.5 347.7,291.4 353.9,300.2 359.0,297.7 369.0,293.1 377.8,297.7 384.1,295.1 385.3,296.3 387.8,298.9 389.1,298.3 392.9,296.4 394.1,296.8 396.6,297.7 397.9,295.2 399.1,292.9 399.9,291.4 404.1,300.7 410.4,297.7 415.4,301.4 416.7,301.0 421.7,299.7 429.3,292.6 434.8,276.3 435.5,277.8 441.8,291.1 443.1,293.9 449.3,293.9 450.6,294.6 455.6,297.5 458.1,298.9 463.1,301.4 469.4,292.6 475.7,301.4 484.5,282.6 488.8,303.9 490.0,303.2 500.1,297.7 507.6,302.7 512.1,290.6 512.6,290.8 515.1,292.1 518.9,293.9 522.7,302.5 523.9,305.2 531.4,299.7 536.5,304.7 537.7,304.5 546.5,303.3 550.3,302.7 554.0,295.2 555.3,292.6 561.6,311.5 562.8,310.6 566.6,307.7 572.9,304.7 577.9,308.1 580.4,309.8 582.9,311.5 590.4,300.2 596.7,311.5 598.0,310.6 600.5,309.0 604.3,314.0 605.5,313.0 615.6,304.7 623.1,285.1 625.6,285.1 627.6,285.1 631.9,302.7 633.1,302.2 640.7,298.9 645.7,303.1 648.2,305.2 658.2,297.7 660.0,308.7 668.8,306.2 681.3,317.5 691.4,294.9 692.6,296.7 700.2,308.2 701.4,310.0 705.2,306.8 709.0,303.7 710.2,304.5 712.7,306.2 716.5,287.4 717.7,287.6 724.0,288.6 725.3,289.2 727.8,290.2 732.8,292.4 740.3,299.9 747.4,282.4 754.2,306.2 759.9,292.4 760.4,293.7 765.4,306.2 766.7,304.1 770.0,298.7 770.5,299.2 775.5,303.7 783.0,307.4 785.5,308.7 793.1,301.2 800.6,304.9 803.1,306.2 805.6,307.5 811.9,289.9 816.9,303.7 820.7,305.2 823.2,306.2 828.2,298.7 830.7,300.5 833.2,302.4 837.5,285.3 838.8,280.1 842.6,285.1 847.1,265.6 855.1,305.2 860.1,304.0 862.6,309.0 866.4,296.4 870.2,307.7 872.7,304.9 875.2,302.2 877.7,303.1 880.2,304.0 882.7,303.1 885.2,302.2 886.5,305.0 889.0,310.3 894.0,310.3 900.3,316.5 901.6,317.8 905.3,314.0 906.6,314.4 911.6,315.8 915.4,311.2 916.6,309.8 922.9,310.3 927.9,296.4 928.4,297.7 932.9,309.8 935.4,309.8 941.7,309.8 943.0,309.8 946.7,297.2 953.0,315.8 953.5,314.7 955.5,310.4 958.5,304.0 963.1,315.8 964.3,313.6 970.1,302.7 974.4,316.5 976.9,308.6 978.6,303.2 985.7,316.8 988.2,321.6 990.7,314.0 993.2,325.3 1000.7,312.8 1005.0,327.8"/>
  <!-- legend dots -->
  <circle cx="253.6" cy="501.6" r="3.8" fill="#3c5fae"/>
  <circle cx="253.6" cy="518.7" r="3.8" fill="#7e5696"/>
  <circle cx="253.6" cy="535.8" r="3.8" fill="#bf5d82"/>
  <circle cx="507.2" cy="501.6" r="3.8" fill="#a66cc4"/>
  <circle cx="507.2" cy="518.7" r="3.8" fill="#3f8a74"/>
  <circle cx="507.2" cy="535.8" r="3.8" fill="#98d59c"/>
  <circle cx="761" cy="501.6" r="3.8" fill="#e06d47"/>
  <circle cx="761" cy="518.7" r="3.8" fill="#e8a55e"/>
</svg>
<div class="a" style="right:53px;top:165.65px;font-size:14px;color:#7a8183;text-align:right">49.66 ms</div>
<div class="a" style="right:53px;top:182.15px;font-size:14px;color:#7a8183;text-align:right">App Server</div>
<div class="a yl" style="left:272px;top:223.89px">70 ms</div>
<div class="a yl" style="left:272px;top:254.49px">60 ms</div>
<div class="a yl" style="left:272px;top:285.09px">50 ms</div>
<div class="a yl" style="left:272px;top:315.69px">40 ms</div>
<div class="a yl" style="left:272px;top:346.29px">30 ms</div>
<div class="a yl" style="left:272px;top:376.89px">20 ms</div>
<div class="a yl" style="left:272px;top:407.49px">10 ms</div>
<div class="a yl" style="left:272px;top:438.09px">0 ms</div>
<div class="a yl" style="left:228px;top:352px;width:52px;text-align:center;transform:rotate(-90deg);font-size:11.5px;color:#979d9e">(Duration)</div>
<div class="a xl" style="left:285.30px;top:463.4px">8:00am</div>
<div class="a xl" style="left:400.75px;top:463.4px">8:30am</div>
<div class="a xl" style="left:516.20px;top:463.4px">9:00am</div>
<div class="a xl" style="left:631.65px;top:463.4px">9:30am</div>
<div class="a xl" style="left:747.10px;top:463.4px">10:00am</div>
<div class="a xl" style="left:862.55px;top:463.4px">10:30am</div>
<div class="box" style="left:988px;top:460px;width:17.5px;height:16px;overflow:hidden"><div class="a xl" style="left:0.5px;top:3.4px;width:auto;text-align:left">11:00am</div></div>
<div class="a lg" style="left:262.3px;top:497.2px;letter-spacing:-0.3px">Response time</div>
<div class="a lg" style="left:262.3px;top:514.8px">Datastore/operation/MySQL/commit</div>
<div class="a lg" style="left:262.3px;top:532.4px">Datastore/operation/Memcached/get</div>
<div class="a lg" style="left:515.4px;top:497.2px">WebTransaction/Custom/rest/race/*/parti...</div>
<div class="a lg" style="left:515.4px;top:514.8px">Datastore/operation/Memcached/set</div>
<div class="a lg" style="left:515.4px;top:532.4px">Datastore/operation/Memcached/decr</div>
<div class="a lg" style="left:769.7px;top:497.2px;letter-spacing:-0.1px">Datastore/statement/MySQL/registration_...</div>
<div class="a lg" style="left:769.7px;top:514.8px">Datastore/operation/Memcached/incr</div>
</body></html>
